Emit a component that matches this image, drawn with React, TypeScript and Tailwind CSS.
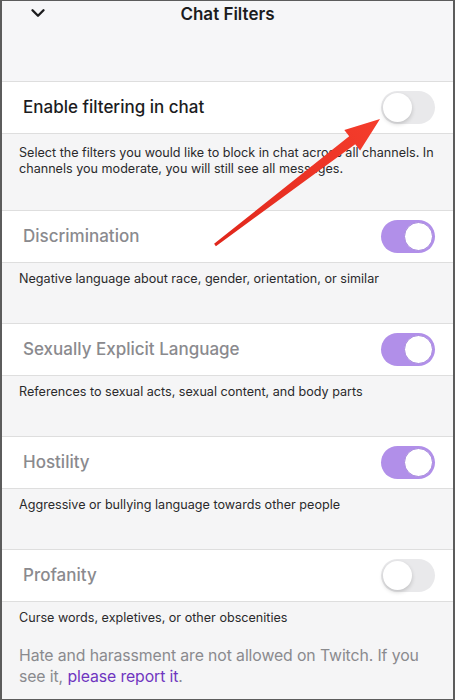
import { ChevronDown } from "lucide-react";

type Filter = {
  label: string;
  description: string;
  on: boolean;
};

const filters: Filter[] = [
  {
    label: "Discrimination",
    description: "Negative language about race, gender, orientation, or similar",
    on: true,
  },
  {
    label: "Sexually Explicit Language",
    description: "References to sexual acts, sexual content, and body parts",
    on: true,
  },
  {
    label: "Hostility",
    description: "Aggressive or bullying language towards other people",
    on: true,
  },
  {
    label: "Profanity",
    description: "Curse words, expletives, or other obscenities",
    on: false,
  },
];

function Toggle({ on }: { on: boolean }) {
  if (on) {
    return (
      <div className="flex h-[33px] w-[54px] items-center justify-end rounded-full bg-[#b18fe9] p-[2px]">
        <div className="h-[29px] w-[29px] rounded-full border border-[#a688dc] bg-white" />
      </div>
    );
  }
  return (
    <div className="flex h-[33px] w-[54px] items-center rounded-full bg-[#e9e9eb] p-[2px]">
      <div className="h-[29px] w-[29px] rounded-full bg-white shadow-[0_2px_4px_rgba(0,0,0,0.18)]" />
    </div>
  );
}

export default function App() {
  return (
    <main
      className="relative h-[700px] w-full overflow-hidden border-x-2 border-y border-[#5c5c5c] bg-[#f5f5f6] text-[#1c1c1e]"
      style={{ fontFamily: "Inter, 'Noto Sans', sans-serif" }}
    >
      <header className="relative h-[80px] bg-[#f6f6f8]">
        <ChevronDown className="absolute left-[25px] top-[1px] h-[22px] w-[22px]" strokeWidth={2.6} />
        <h1 className="pt-[2px] text-center text-[17px] font-semibold leading-[22px]">Chat Filters</h1>
      </header>

      <div className="flex h-[53px] items-center justify-between border-y border-[#dedede] bg-white pl-[21px] pr-[18px]">
        <span className="text-[17px] font-medium">Enable filtering in chat</span>
        <Toggle on={false} />
      </div>
      <p className="h-[76px] px-[17px] pt-[11px] text-[12.6px] leading-[16px] text-[#2a2a2c]">
        Select the filters you would like to block in chat across all channels. In channels you moderate, you will still see all messages.
      </p>

      {filters.map((f, i) => (
        <section key={f.label}>
          <div className="flex h-[53px] items-center justify-between border-y border-[#dedede] bg-white pl-[21px] pr-[18px]">
            <span className="text-[17px] font-medium text-[#8a8a8e]">{f.label}</span>
            <Toggle on={f.on} />
          </div>
          <p
            className={
              i === filters.length - 1
                ? "h-[43px] px-[17px] pt-[8px] text-[12.6px] leading-[16px] text-[#2a2a2c]"
                : "h-[60px] px-[17px] pt-[8px] text-[12.6px] leading-[16px] text-[#2a2a2c]"
            }
          >
            {f.description}
          </p>
        </section>
      ))}

      <p className="px-[17px] text-[15.8px] leading-[21px] tracking-[-0.1px] text-[#8a8a8e]">
        Hate and harassment are not allowed on Twitch. If you see it,{" "}
        <span className="text-[#6f35c0]">please report it</span>.
      </p>

      <svg className="pointer-events-none absolute left-0 top-0" width="455" height="700" viewBox="0 0 455 700">
        <defs>
          <linearGradient id="arrow" x1="213" y1="244" x2="378" y2="118" gradientUnits="userSpaceOnUse">
            <stop offset="0" stopColor="#e0271c" />
            <stop offset="1" stopColor="#f53d2c" />
          </linearGradient>
        </defs>
        <polygon
          points="212.1,242.8 347.2,135.2 342.3,128.9 378,118 358.1,149.5 353.2,143.2 213.9,245.2"
          fill="url(#arrow)"
        />
      </svg>
    </main>
  );
}
